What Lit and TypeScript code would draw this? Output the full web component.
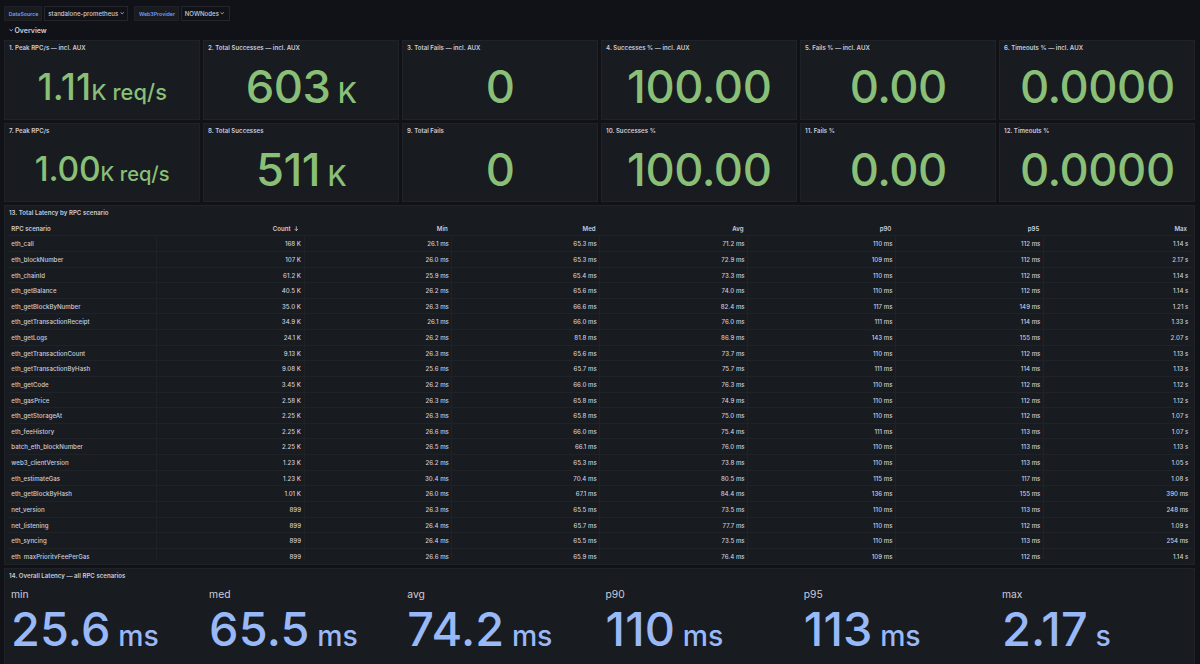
import { LitElement, html, css, svg } from "lit";
import { customElement, property } from "lit/decorators.js";

const chevron = html`<svg class="chevron" viewBox="0 0 10 10">${svg`<path d="M2 3.8 L5 6.4 L8 3.8" fill="none" stroke="currentColor" stroke-width="1.8" stroke-linecap="round" stroke-linejoin="round"/>`}</svg>`;

@customElement("stat-panel")
class StatPanel extends LitElement {
  @property() heading = "";
  @property() value = "";
  @property() unit = "";
  @property({ reflect: true }) size = "large";

  static styles = css`
    :host {
      display: flex;
      flex-direction: column;
      box-sizing: border-box;
      background: #181b1f;
      border: 0.5px solid #1f2227;
      min-width: 0;
    }
    .title {
      font-size: 6.1px;
      font-weight: 600;
      line-height: 14.6px;
      height: 14px;
      padding-left: 3.7px;
      letter-spacing: 0.02px;
      color: #ccccdc;
    }
    .body {
      flex: 1;
      display: flex;
      justify-content: center;
      align-items: baseline;
      white-space: pre;
      color: #89bf77;
      font-weight: 500;
      font-size: 45.3px;
      letter-spacing: -0.45px;
      line-height: 63.6px;
    }
    .unit {
      font-size: 28px;
      letter-spacing: -0.2px;
    }
    :host([size="medium"]) .body {
      font-size: 36.4px;
      letter-spacing: 0.2px;
      line-height: 65px;
    }
    :host([size="medium"]) .unit {
      font-size: 21.8px;
      letter-spacing: 0.1px;
    }
    :host([size="small"]) .body {
      font-size: 33.6px;
      letter-spacing: -0.2px;
      line-height: 62.4px;
    }
    :host([size="small"]) .unit {
      font-size: 20.1px;
      letter-spacing: 0;
    }
  `;

  render() {
    return html`
      <div class="title">${this.heading}</div>
      <div class="body"><span>${this.value}</span><span class="unit">${this.unit}</span></div>
    `;
  }
}

const stats: [string, string, string, string][] = [
  ["1. Peak RPC/s — incl. AUX", "1.11", "K req/s", "medium"],
  ["2. Total Successes — incl. AUX", "603", " K", "large"],
  ["3. Total Fails — incl. AUX", "0", "", "large"],
  ["4. Successes % — incl. AUX", "100.00", "", "large"],
  ["5. Fails % — incl. AUX", "0.00", "", "large"],
  ["6. Timeouts % — incl. AUX", "0.0000", "", "large"],
  ["7. Peak RPC/s", "1.00", "K req/s", "small"],
  ["8. Total Successes", "511", " K", "large"],
  ["9. Total Fails", "0", "", "large"],
  ["10. Successes %", "100.00", "", "large"],
  ["11. Fails %", "0.00", "", "large"],
  ["12. Timeouts %", "0.0000", "", "large"],
];

const columns = ["RPC scenario", "Count", "Min", "Med", "Avg", "p90", "p95", "Max"];

const rows = `eth_call|168 K|26.1 ms|65.3 ms|71.2 ms|110 ms|112 ms|1.14 s
eth_blockNumber|107 K|26.0 ms|65.3 ms|72.9 ms|109 ms|112 ms|2.17 s
eth_chainId|61.2 K|25.9 ms|65.4 ms|73.3 ms|110 ms|112 ms|1.14 s
eth_getBalance|40.5 K|26.2 ms|65.6 ms|74.0 ms|110 ms|112 ms|1.14 s
eth_getBlockByNumber|35.0 K|26.3 ms|66.6 ms|82.4 ms|117 ms|149 ms|1.21 s
eth_getTransactionReceipt|34.9 K|26.1 ms|66.0 ms|76.0 ms|111 ms|114 ms|1.33 s
eth_getLogs|24.1 K|26.2 ms|81.8 ms|86.9 ms|143 ms|155 ms|2.07 s
eth_getTransactionCount|9.13 K|26.3 ms|65.6 ms|73.7 ms|110 ms|112 ms|1.13 s
eth_getTransactionByHash|9.08 K|25.6 ms|65.7 ms|75.7 ms|111 ms|114 ms|1.13 s
eth_getCode|3.45 K|26.2 ms|66.0 ms|76.3 ms|110 ms|112 ms|1.12 s
eth_gasPrice|2.58 K|26.3 ms|65.8 ms|74.9 ms|110 ms|112 ms|1.12 s
eth_getStorageAt|2.25 K|26.3 ms|65.8 ms|75.0 ms|110 ms|112 ms|1.07 s
eth_feeHistory|2.25 K|26.6 ms|66.0 ms|75.4 ms|111 ms|113 ms|1.07 s
batch_eth_blockNumber|2.25 K|26.5 ms|66.1 ms|76.0 ms|110 ms|113 ms|1.13 s
web3_clientVersion|1.23 K|26.2 ms|65.3 ms|73.8 ms|110 ms|113 ms|1.05 s
eth_estimateGas|1.23 K|30.4 ms|70.4 ms|80.5 ms|115 ms|117 ms|1.08 s
eth_getBlockByHash|1.01 K|26.0 ms|67.1 ms|84.4 ms|136 ms|155 ms|390 ms
net_version|899|26.3 ms|65.5 ms|73.5 ms|110 ms|113 ms|248 ms
net_listening|899|26.4 ms|65.7 ms|77.7 ms|110 ms|112 ms|1.09 s
eth_syncing|899|26.4 ms|65.5 ms|73.5 ms|110 ms|113 ms|254 ms
eth_maxPriorityFeePerGas|899|26.6 ms|65.9 ms|76.4 ms|109 ms|112 ms|1.14 s`
  .split("\n")
  .map((line) => line.split("|"));

const overall: [string, string, string][] = [
  ["min", "25.6", " ms"],
  ["med", "65.5", " ms"],
  ["avg", "74.2", " ms"],
  ["p90", "110", " ms"],
  ["p95", "113", " ms"],
  ["max", "2.17", " s"],
];

@customElement("app-root")
class AppRoot extends LitElement {
  static styles = css`
    :host {
      display: flex;
      flex-direction: column;
      box-sizing: border-box;
      width: 1200px;
      height: 664px;
      overflow: hidden;
      padding: 6px 4.8px 0 4.3px;
      background: #111217;
      color: #ccccdc;
      font-family: Inter, "Liberation Sans", sans-serif;
      font-size: 6.1px;
    }
    .controls {
      display: flex;
      height: 15px;
      gap: 6px;
    }
    .variable {
      display: flex;
    }
    .label,
    .select {
      box-sizing: border-box;
      display: flex;
      align-items: center;
      border: 0.5px solid #1f2127;
      white-space: nowrap;
    }
    .label {
      background: #181b1f;
      color: #6e9fff;
      font-size: 5.25px;
      font-weight: 600;
      padding: 0 3.4px;
      margin-right: 2px;
    }
    .select {
      font-size: 6.1px;
      font-weight: 500;
      padding: 0 0 0 3px;
      gap: 1.3px;
      border-color: #24262c;
    }
    .source { width: 38px; }
    .provider { width: 44.2px; }
    .source-value { width: 84.2px; }
    .provider-value { width: 49.4px; }
    .chevron {
      width: 4.4px;
      height: 4.4px;
      flex: none;
    }
    .section {
      display: flex;
      align-items: center;
      gap: 1.2px;
      height: 19.3px;
      padding-left: 4.6px;
      font-size: 7px;
      font-weight: 600;
      box-sizing: border-box;
    }
    .stats {
      display: grid;
      grid-template-columns: repeat(6, 1fr);
      grid-auto-rows: 79.5px;
      column-gap: 3.2px;
      row-gap: 3px;
    }
    .panel {
      box-sizing: border-box;
      background: #181b1f;
      border: 0.5px solid #1f2227;
      margin-top: 3px;
    }
    .title {
      font-size: 6.1px;
      font-weight: 600;
      line-height: 14px;
      padding-left: 3.7px;
      letter-spacing: 0.02px;
    }
    .table-panel {
      height: 360px;
      flex: none;
    }
    .table {
      margin: 0 3.5px;
      height: 338.3px;
      overflow: hidden;
    }
    .row {
      display: grid;
      grid-template-columns: repeat(7, 147.88px) 1fr;
      height: 15.63px;
      box-sizing: border-box;
      border-bottom: 1px solid #1f2226;
      font-weight: 500;
    }
    .head {
      height: 16px;
      font-weight: 600;
    }
    .cell {
      box-sizing: border-box;
      padding: 0 2.5px;
      line-height: 15.4px;
      text-align: right;
      letter-spacing: 0.03px;
      border-right: 1px solid #1f2226;
      white-space: nowrap;
    }
    .cell:first-child {
      text-align: left;
    }
    .cell:last-child {
      border-right: none;
      padding-right: 2.3px;
    }
    .head .cell {
      border-right-color: transparent;
      padding-right: 3.7px;
      line-height: 18.4px;
      letter-spacing: 0;
    }
    .head .cell:nth-child(2) {
      padding-right: 5px;
    }
    .arrow {
      width: 4.6px;
      height: 5.5px;
      margin-left: 3.4px;
      vertical-align: -0.6px;
    }
    .overall {
      flex: 1;
      border-bottom: none;
    }
    .figures {
      display: grid;
      grid-template-columns: repeat(6, 1fr);
      column-gap: 6px;
      padding: 2.8px 0 0 5.6px;
    }
    .name {
      font-size: 10.3px;
      line-height: 16px;
    }
    .figure {
      color: #99b8f7;
      font-weight: 500;
      font-size: 46.8px;
      line-height: 54.2px;
      white-space: pre;
      letter-spacing: 0.2px;
    }
    .figure-unit {
      font-size: 28.4px;
      letter-spacing: 0;
    }
  `;

  render() {
    return html`
      <div class="controls">
        <div class="variable">
          <div class="label source">DataSource</div>
          <div class="select source-value">standalone-prometheus ${chevron}</div>
        </div>
        <div class="variable">
          <div class="label provider">Web3Provider</div>
          <div class="select provider-value">NOWNodes ${chevron}</div>
        </div>
      </div>
      <div class="section">${chevron}<span>Overview</span></div>
      <div class="stats">
        ${stats.map(
          ([heading, value, unit, size]) =>
            html`<stat-panel .heading=${heading} .value=${value} .unit=${unit} .size=${size}></stat-panel>`
        )}
      </div>
      <div class="panel table-panel">
        <div class="title">13. Total Latency by RPC scenario</div>
        <div class="table">
          <div class="row head">
            ${columns.map(
              (name) => html`<div class="cell">${name}${name === "Count"
                ? html`<svg class="arrow" viewBox="0 0 10 12"><path d="M5 1.5 V10 M1.8 7 L5 10.2 L8.2 7" fill="none" stroke="currentColor" stroke-width="1.7" stroke-linecap="round" stroke-linejoin="round"/></svg>`
                : ""}</div>`
            )}
          </div>
          ${rows.map(
            (cells) => html`<div class="row">${cells.map((text) => html`<div class="cell">${text}</div>`)}</div>`
          )}
        </div>
      </div>
      <div class="panel overall">
        <div class="title">14. Overall Latency — all RPC scenarios</div>
        <div class="figures">
          ${overall.map(
            ([name, value, unit]) => html`<div>
              <div class="name">${name}</div>
              <div class="figure">${value}<span class="figure-unit">${unit}</span></div>
            </div>`
          )}
        </div>
      </div>
    `;
  }
}
